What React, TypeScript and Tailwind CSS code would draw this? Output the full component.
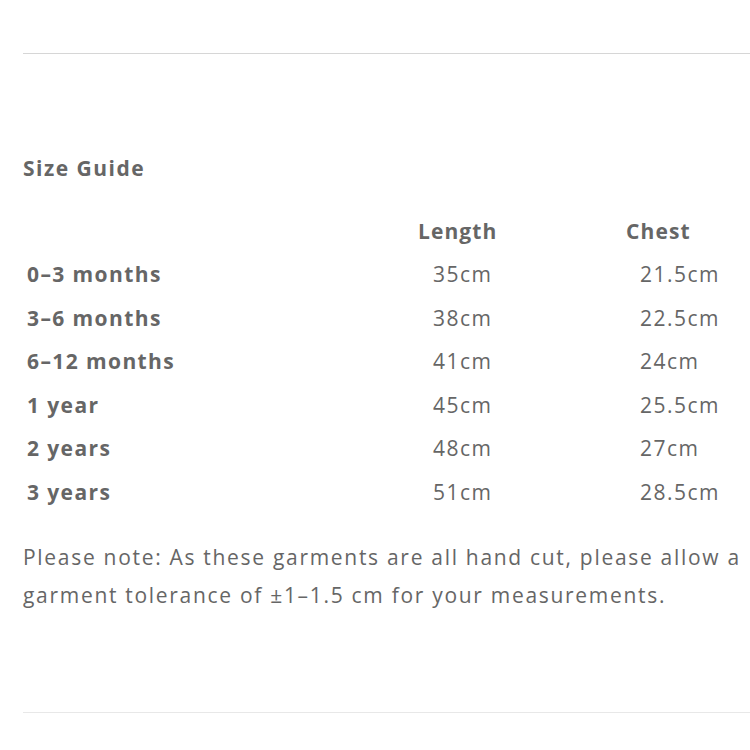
import React from "react";

const rows = [
  ["0–3 months", "35cm", "21.5cm"],
  ["3–6 months", "38cm", "22.5cm"],
  ["6–12 months", "41cm", "24cm"],
  ["1 year", "45cm", "25.5cm"],
  ["2 years", "48cm", "27cm"],
  ["3 years", "51cm", "28.5cm"],
];

export default function App() {
  return (
    <div
      className="w-[750px] h-[750px] bg-white text-[#666666] overflow-hidden"
      style={{ fontFamily: '"Open Sans", "Liberation Sans", sans-serif' }}
    >
      <div className="pt-[53px] pl-[23px]">
        <div className="h-px bg-[#d6d6d6]" />
      </div>
      <div className="pl-[23px] mt-[99px] h-[30px] leading-[30px] text-[21px] font-bold tracking-[1.5px]">
        Size Guide
      </div>
      <div className="mt-[27px] pl-[27px]">
        <div className="grid grid-cols-[391px_208px_1fr] h-[43px] items-center text-[21px] font-bold tracking-[1.1px]">
          <div />
          <div>Length</div>
          <div>Chest</div>
        </div>
        {rows.map((r) => (
          <div
            key={r[0]}
            className="grid grid-cols-[391px_208px_1fr] h-[43.6px] items-center text-[21px] tracking-[1.5px]"
          >
            <div className="font-bold tracking-[1.4px]">{r[0]}</div>
            <div className="pl-[15px]">{r[1]}</div>
            <div className="pl-[14px]">{r[2]}</div>
          </div>
        ))}
      </div>
      <p className="mt-[23px] pl-[23px] text-[21px] leading-[38px] tracking-[1.7px] whitespace-nowrap">
        Please note: As these garments are all hand cut, please allow a<br />
        garment tolerance of ±1–1.5 cm for your measurements.
      </p>
      <div className="mt-[98px] pl-[23px]">
        <div className="h-px bg-[#e8e8e8]" />
      </div>
    </div>
  );
}
